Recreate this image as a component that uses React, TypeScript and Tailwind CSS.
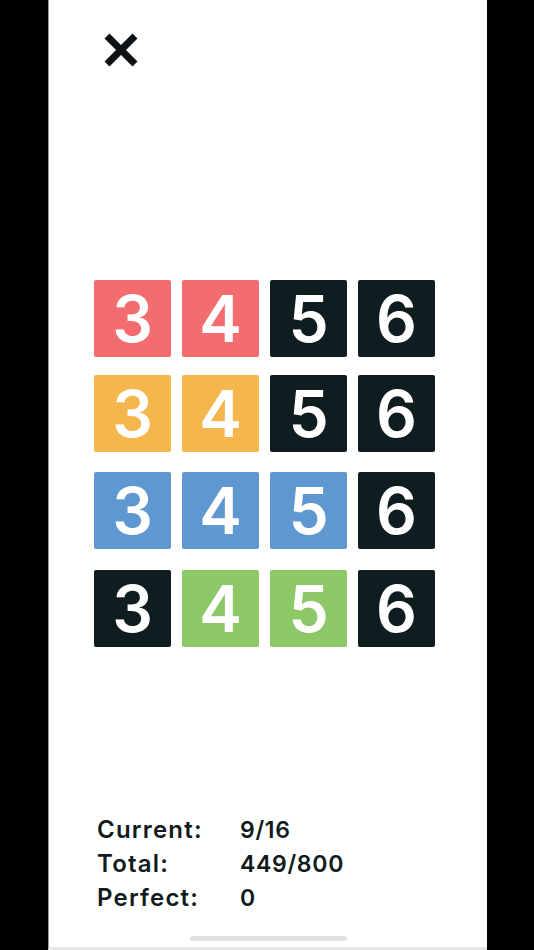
import React from "react";

const colors: Record<string, string> = {
  r: "bg-[#f36c6f]",
  y: "bg-[#f5b64e]",
  b: "bg-[#5f98d1]",
  g: "bg-[#8cc866]",
  k: "bg-[#0f1c20]",
};

const rows = [
  { tiles: ["r", "r", "k", "k"], mt: "mt-0" },
  { tiles: ["y", "y", "k", "k"], mt: "mt-[18px]" },
  { tiles: ["b", "b", "b", "k"], mt: "mt-[20px]" },
  { tiles: ["k", "g", "g", "k"], mt: "mt-[21px]" },
];

const stats = [
  ["Current:", "9/16"],
  ["Total:", "449/800"],
  ["Perfect:", "0"],
];

export default function App() {
  return (
    <div className="flex w-[534px] h-[950px] bg-black" style={{ fontFamily: 'Inter, "Liberation Sans", Arial, sans-serif' }}>
      <div className="w-[48px] shrink-0 bg-black" />
      <div className="relative flex flex-col w-[439px] shrink-0 bg-white border-l border-[#9a9a9a] border-b-[3px] border-b-[#e6e6e6]">
        <div className="ml-[54px] mt-[32px] w-[36px] h-[36px]">
          <svg viewBox="0 0 36 36" width="36" height="36">
            <path d="M4 4 L32 32 M32 4 L4 32" stroke="#0b1114" strokeWidth="7" strokeLinecap="butt" />
          </svg>
        </div>
        <div className="ml-[45px] mt-[212px] flex flex-col">
          {rows.map((row, i) => (
            <div key={i} className={`flex gap-[11px] ${row.mt}`}>
              {row.tiles.map((c, j) => (
                <div
                  key={j}
                  className={`${colors[c]} w-[77px] h-[77px] rounded-[2px] flex items-center justify-center text-white text-[64px] font-semibold leading-none`}
                >
                  <span className="mt-[1px]">{j + 3}</span>
                </div>
              ))}
            </div>
          ))}
        </div>
        <div className="ml-[48px] mt-[166px] flex flex-col font-semibold text-[#111a1d] leading-[34px]">
          {stats.map(([l, v]) => (
            <div key={l} className="flex">
              <span className="w-[143px] text-[24px] tracking-[1.2px]">{l}</span>
              <span className="text-[23px] tracking-[0.7px]">{v}</span>
            </div>
          ))}
        </div>
        <div className="absolute left-[141px] bottom-[6px] w-[157px] h-[5px] rounded-full bg-[#e2e2e2]" />
      </div>
      <div className="flex-1 bg-black" />
    </div>
  );
}
